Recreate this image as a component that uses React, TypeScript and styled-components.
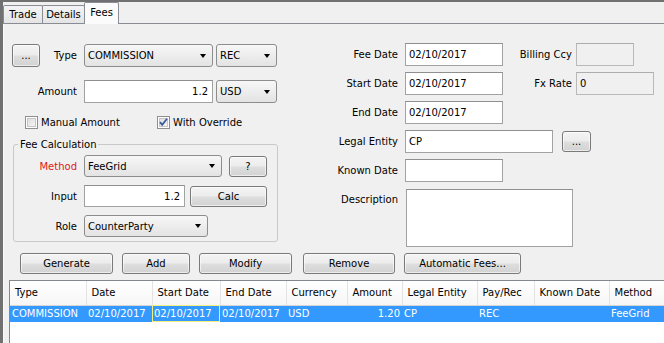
import styled, { createGlobalStyle } from 'styled-components';

const GlobalStyle = createGlobalStyle`
  body {
    margin: 0;
    background: #f0f0f0;
  }
  * {
    box-sizing: border-box;
  }
`;

const Window = styled.div`
  width: 664px;
  height: 343px;
  overflow: hidden;
  display: flex;
  flex-direction: column;
  background: #f0f0f0;
  border-top: 2px solid #717171;
  border-left: 3px solid #717171;
  font-family: 'DejaVu Sans', 'Liberation Sans', sans-serif;
  font-size: 10px;
  color: #000;
`;

const TabStrip = styled.div`
  display: flex;
  align-items: flex-end;
  height: 22px;
  border-bottom: 1px solid #898c95;
`;

const Tab = styled.div<{ $w: number; $active?: boolean; $first?: boolean }>`
  position: relative;
  z-index: ${p => (p.$active ? 1 : 0)};
  width: ${p => p.$w}px;
  height: ${p => (p.$active ? 22 : 18)}px;
  margin-left: ${p => (p.$first ? 0 : -1)}px;
  margin-bottom: ${p => (p.$active ? -1 : 0)}px;
  display: flex;
  align-items: center;
  justify-content: center;
  padding-bottom: ${p => (p.$active ? 2 : 0)}px;
  border: 1px solid #898c95;
  border-bottom: none;
  border-radius: 2px 2px 0 0;
  background: ${p => (p.$active ? '#fbfbfb' : 'linear-gradient(#f4f4f4, #e4e4e4)')};
`;

const Panel = styled.div`
  flex: 1;
  display: flex;
  flex-direction: column;
  padding-top: 19px;
  border-left: 1px solid #fbfbfb;
`;

const TopSection = styled.div`
  display: flex;
  align-items: flex-start;
  gap: 43px;
  padding-left: 8px;
`;

const LeftCol = styled.div`
  width: 265px;
  display: flex;
  flex-direction: column;
  padding-top: 1px;
`;

const RightCol = styled.div`
  width: 334px;
  display: flex;
  flex-direction: column;
  gap: 6px;
`;

const Row = styled.div<{ $mt?: number; $h?: number }>`
  display: flex;
  align-items: center;
  height: ${p => p.$h ?? 23}px;
  margin-top: ${p => p.$mt ?? 0}px;
`;

const Label = styled.div<{ $w: number; $red?: boolean; $top?: boolean }>`
  width: ${p => p.$w}px;
  flex-shrink: 0;
  padding-right: 7px;
  text-align: right;
  white-space: nowrap;
  color: ${p => (p.$red ? '#e01818' : '#000')};
  align-self: ${p => (p.$top ? 'flex-start' : 'center')};
  padding-top: ${p => (p.$top ? 6 : 0)}px;
`;

const SubLabel = styled.div<{ $w: number }>`
  width: ${p => p.$w}px;
  padding-right: 4px;
  text-align: right;
  white-space: nowrap;
`;

const TextBox = styled.div<{ $w: number; $h?: number; $right?: boolean; $disabled?: boolean }>`
  width: ${p => p.$w}px;
  height: ${p => p.$h ?? 23}px;
  display: flex;
  align-items: center;
  justify-content: ${p => (p.$right ? 'flex-end' : 'flex-start')};
  padding: 0 4px 0 3px;
  background: ${p => (p.$disabled ? '#f0f0f0' : '#fff')};
  border: 1px solid ${p => (p.$disabled ? '#b9b9b9' : '#a2a2a2')};
  border-top-color: ${p => (p.$disabled ? '#adadad' : '#8f8f8f')};
  white-space: nowrap;
`;

const TextArea = styled.div`
  width: 167px;
  height: 58px;
  margin-left: 1px;
  margin-top: 1px;
  background: #fff;
  border: 1px solid #a2a2a2;
  border-top-color: #8f8f8f;
`;

const Combo = styled.div<{ $w: number; $h?: number; $ml?: number }>`
  width: ${p => p.$w}px;
  height: ${p => p.$h ?? 23}px;
  margin-left: ${p => p.$ml ?? 0}px;
  display: flex;
  align-items: center;
  padding-left: 3px;
  border: 1px solid #8d8d8d;
  border-radius: 3px;
  background: linear-gradient(#f7f7f7, #e3e3e3);
  white-space: nowrap;

  &::after {
    content: '';
    margin-left: auto;
    margin-right: 6px;
    border-top: 4px solid #000;
    border-left: 3.5px solid transparent;
    border-right: 3.5px solid transparent;
  }
`;

const Button = styled.div<{ $w: number; $h?: number; $ml?: number }>`
  width: ${p => p.$w}px;
  height: ${p => p.$h ?? 21}px;
  margin-left: ${p => p.$ml ?? 0}px;
  flex-shrink: 0;
  display: flex;
  align-items: center;
  justify-content: center;
  border: 1px solid #7a7a7a;
  border-radius: 3px;
  background: linear-gradient(#f4f4f4 0%, #ececec 48%, #dedede 52%, #d2d2d2 100%);
  box-shadow: inset 0 0 0 1px rgba(255, 255, 255, 0.6);
  white-space: nowrap;
`;

const CheckRow = styled.div`
  display: flex;
  align-items: center;
  height: 13px;
  margin-top: 13px;
  padding-left: 13px;
`;

const CheckItem = styled.label<{ $w?: number }>`
  display: flex;
  align-items: center;
  gap: 3px;
  width: ${p => (p.$w ? `${p.$w}px` : 'auto')};
`;

const Group = styled.fieldset`
  width: 265px;
  margin: 9px 0 0 1px;
  padding: 4px 0 4px 0;
  border: 1px solid #c9c9c9;
  border-radius: 3px;
  display: flex;
  flex-direction: column;
  gap: 8px;
`;

const Legend = styled.legend`
  margin-left: 4px;
  padding: 0 2px;
  line-height: 13px;
`;

const ButtonBar = styled.div`
  display: flex;
  align-items: center;
  gap: 9px;
  margin-top: 6px;
  padding-left: 16px;
`;

const TableWrap = styled.div`
  flex: 1;
  margin: 6px 0 0 5px;
  background: #fff;
  border-top: 1px solid #828790;
  border-left: 1px solid #828790;
  overflow: hidden;
`;

const Table = styled.table`
  border-collapse: collapse;
  table-layout: fixed;
  width: 680px;
  font-size: 10px;
`;

const Th = styled.th`
  height: 24px;
  padding: 0 0 0 5px;
  text-align: left;
  font-weight: normal;
  background: linear-gradient(#ffffff, #f6f6f6);
  border-right: 1px solid #e3e3e3;
  border-bottom: 1px solid #d5d5d5;
  white-space: nowrap;
  overflow: hidden;
`;

const Td = styled.td<{ $right?: boolean; $focus?: boolean }>`
  height: 17px;
  padding: ${p => (p.$right ? '0 2px 0 0' : '0 0 0 2px')};
  text-align: ${p => (p.$right ? 'right' : 'left')};
  background: #3399ff;
  color: #fff;
  white-space: nowrap;
  overflow: hidden;
  outline: ${p => (p.$focus ? '1px solid #f2ef7c' : 'none')};
  outline-offset: -1px;
`;

function CheckBox({ checked }: { checked?: boolean }) {
  return (
    <svg width="13" height="13" viewBox="0 0 13 13">
      <defs>
        <linearGradient id="cbfill" x1="0" y1="0" x2="1" y2="1">
          <stop offset="0" stopColor="#dcdcdc" />
          <stop offset="1" stopColor="#f6f6f6" />
        </linearGradient>
      </defs>
      <rect x="0.5" y="0.5" width="12" height="12" fill="#fff" stroke="#8f8f8f" />
      <rect x="2.5" y="2.5" width="8" height="8" fill="url(#cbfill)" stroke="#c6c6c6" />
      {checked && (
        <path d="M3 6.2 L5.2 8.8 L10 2.8" fill="none" stroke="#3c5a9a" strokeWidth="1.8" />
      )}
    </svg>
  );
}

const columns = [
  { title: 'Type', w: 76 },
  { title: 'Date', w: 66 },
  { title: 'Start Date', w: 68 },
  { title: 'End Date', w: 66 },
  { title: 'Currency', w: 61 },
  { title: 'Amount', w: 55 },
  { title: 'Legal Entity', w: 75 },
  { title: 'Pay/Rec', w: 57 },
  { title: 'Known Date', w: 75 },
  { title: 'Method', w: 81 },
];

export default function App() {
  return (
    <>
      <GlobalStyle />
      <Window>
        <TabStrip>
          <Tab $w={40} $first>Trade</Tab>
          <Tab $w={43}>Details</Tab>
          <Tab $w={35} $active>Fees</Tab>
        </TabStrip>

        <Panel>
          <TopSection>
            <LeftCol>
              <Row>
                <Button $w={28} $h={23}>...</Button>
                <Label $w={44}>Type</Label>
                <Combo $w={129}>COMMISSION</Combo>
                <Combo $w={61} $ml={3}>REC</Combo>
              </Row>
              <Row $mt={13}>
                <Label $w={72}>Amount</Label>
                <TextBox $w={129} $right>1.2</TextBox>
                <Combo $w={61} $ml={3}>USD</Combo>
              </Row>
              <CheckRow>
                <CheckItem $w={132}>
                  <CheckBox />
                  Manual Amount
                </CheckItem>
                <CheckItem>
                  <CheckBox checked />
                  With Override
                </CheckItem>
              </CheckRow>
              <Group>
                <Legend>Fee Calculation</Legend>
                <Row $h={22}>
                  <Label $w={70} $red>Method</Label>
                  <Combo $w={138} $h={22}>FeeGrid</Combo>
                  <Button $w={38} $ml={7}>?</Button>
                </Row>
                <Row $h={22}>
                  <Label $w={70}>Input</Label>
                  <TextBox $w={101} $h={22} $right>1.2</TextBox>
                  <Button $w={77} $ml={5}>Calc</Button>
                </Row>
                <Row $h={22}>
                  <Label $w={70}>Role</Label>
                  <Combo $w={124} $h={22}>CounterParty</Combo>
                </Row>
              </Group>
            </LeftCol>

            <RightCol>
              <Row>
                <Label $w={85}>Fee Date</Label>
                <TextBox $w={98}>02/10/2017</TextBox>
                <SubLabel $w={73}>Billing Ccy</SubLabel>
                <TextBox $w={58} $disabled />
              </Row>
              <Row>
                <Label $w={85}>Start Date</Label>
                <TextBox $w={98}>02/10/2017</TextBox>
                <SubLabel $w={73}>Fx Rate</SubLabel>
                <TextBox $w={78} $disabled>0</TextBox>
              </Row>
              <Row>
                <Label $w={85}>End Date</Label>
                <TextBox $w={98}>02/10/2017</TextBox>
              </Row>
              <Row>
                <Label $w={85}>Legal Entity</Label>
                <TextBox $w={148}>CP</TextBox>
                <Button $w={29} $ml={9}>...</Button>
              </Row>
              <Row>
                <Label $w={85}>Known Date</Label>
                <TextBox $w={98} />
              </Row>
              <Row $h={59}>
                <Label $w={85} $top>Description</Label>
                <TextArea />
              </Row>
            </RightCol>
          </TopSection>

          <ButtonBar>
            <Button $w={93}>Generate</Button>
            <Button $w={68}>Add</Button>
            <Button $w={93}>Modify</Button>
            <Button $w={92} $ml={2}>Remove</Button>
            <Button $w={117}>Automatic Fees...</Button>
          </ButtonBar>

          <TableWrap>
            <Table>
              <colgroup>
                {columns.map(c => (
                  <col key={c.title} style={{ width: c.w }} />
                ))}
              </colgroup>
              <thead>
                <tr>
                  {columns.map(c => (
                    <Th key={c.title}>{c.title}</Th>
                  ))}
                </tr>
              </thead>
              <tbody>
                <tr>
                  <Td>COMMISSION</Td>
                  <Td>02/10/2017</Td>
                  <Td $focus>02/10/2017</Td>
                  <Td>02/10/2017</Td>
                  <Td>USD</Td>
                  <Td $right>1.20</Td>
                  <Td>CP</Td>
                  <Td>REC</Td>
                  <Td></Td>
                  <Td>FeeGrid</Td>
                </tr>
              </tbody>
            </Table>
          </TableWrap>
        </Panel>
      </Window>
    </>
  );
}
